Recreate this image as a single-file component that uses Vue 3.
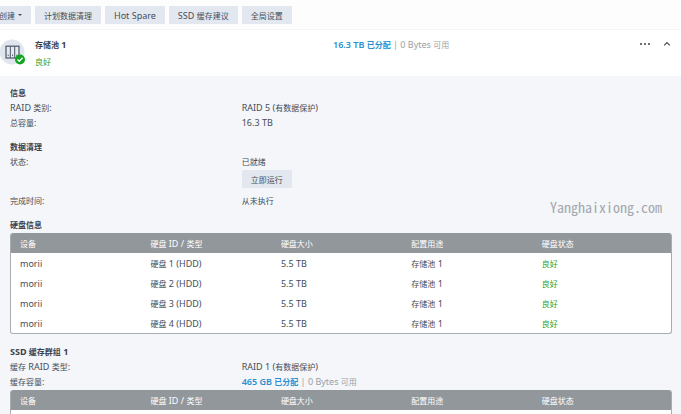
<script setup>
import { h } from 'vue'

// Latin text is set one step larger than the Chinese text beside it.
const Txt = (props) =>
  h(
    'span',
    { class: 'txt' },
    props.t
      .split(/([\u4e00-\u9fff]+)/)
      .filter(Boolean)
      .map((s) => (/[\u4e00-\u9fff]/.test(s) ? h('span', { class: 'han' }, s) : s))
  )
Txt.props = ['t']

const actions = ['计划数据清理', 'Hot Spare', 'SSD 缓存建议', '全局设置']
const columns = ['设备', '硬盘 ID / 类型', '硬盘大小', '配置用途', '硬盘状态']
const disks = [1, 2, 3, 4].map((n) => ({
  device: 'morii',
  id: `硬盘 ${n} (HDD)`,
  size: '5.5 TB',
  usage: '存储池 1',
  status: '良好'
}))
</script>

<template>
  <div class="page">
    <nav class="toolbar">
      <button type="button" class="btn"><Txt t="创建" /><span class="caret"></span></button>
      <button v-for="a in actions" :key="a" type="button" class="btn"><Txt :t="a" /></button>
    </nav>

    <header class="pool">
      <svg class="pool-icon" viewBox="0 0 26 26" aria-hidden="true">
        <circle cx="12" cy="13" r="12.5" fill="#dfe6ee" />
        <rect x="6" y="7.2" width="13" height="11.8" fill="#e6ebf2" stroke="#4c5663" stroke-width="1.2" />
        <path d="M10.3 7.5v11.2M14.7 7.5v11.2" stroke="#4c5663" stroke-width="1" />
        <path d="M8.2 15.6v1.4M12.5 15.6v1.4M16.8 15.6v1.4" stroke="#4c5663" stroke-width="0.9" />
        <circle cx="20" cy="20.5" r="5" fill="#12a522" />
        <path d="M17.5 20.5l1.8 1.8 3.3-3.5" fill="none" stroke="#fff" stroke-width="1.3" />
      </svg>
      <div class="pool-name">
        <h1><Txt t="存储池 1" /></h1>
        <p class="good"><Txt t="良好" /></p>
      </div>
      <p class="usage"><b><Txt t="16.3 TB 已分配" /></b><Txt t=" | 0 Bytes 可用" /></p>
      <div class="tools">
        <button type="button" aria-label="更多">
          <svg width="12" height="10" viewBox="0 0 12 10">
            <g fill="#454d57"><circle cx="2" cy="5" r="1.1" /><circle cx="6" cy="5" r="1.1" /><circle cx="10" cy="5" r="1.1" /></g>
          </svg>
        </button>
        <button type="button" aria-label="收起">
          <svg width="8" height="10" viewBox="0 0 8 10"><path d="M1.2 6.3L4 3.5l2.8 2.8" fill="none" stroke="#454d57" stroke-width="1.2" /></svg>
        </button>
      </div>
    </header>

    <main class="details">
      <section>
        <h2><Txt t="信息" /></h2>
        <dl>
          <dt><Txt t="RAID 类别:" /></dt>
          <dd><Txt t="RAID 5 (有数据保护)" /></dd>
          <dt><Txt t="总容量:" /></dt>
          <dd><Txt t="16.3 TB" /></dd>
        </dl>
      </section>

      <section>
        <h2><Txt t="数据清理" /></h2>
        <dl>
          <dt><Txt t="状态:" /></dt>
          <dd><Txt t="已就绪" /><button type="button" class="btn run"><Txt t="立即运行" /></button></dd>
          <dt><Txt t="完成时间:" /></dt>
          <dd><Txt t="从未执行" /></dd>
        </dl>
        <span class="watermark">Yanghaixiong.com</span>
      </section>

      <section>
        <h2><Txt t="硬盘信息" /></h2>
        <div class="frame">
          <table>
            <thead>
              <tr><th v-for="c in columns" :key="c" scope="col"><Txt :t="c" /></th></tr>
            </thead>
            <tbody>
              <tr v-for="d in disks" :key="d.id">
                <td><Txt :t="d.device" /></td>
                <td><Txt :t="d.id" /></td>
                <td><Txt :t="d.size" /></td>
                <td><Txt :t="d.usage" /></td>
                <td class="good"><Txt :t="d.status" /></td>
              </tr>
            </tbody>
          </table>
        </div>
      </section>

      <section>
        <h2><Txt t="SSD 缓存群组 1" /></h2>
        <dl>
          <dt><Txt t="缓存 RAID 类型:" /></dt>
          <dd><Txt t="RAID 1 (有数据保护)" /></dd>
          <dt><Txt t="缓存容量:" /></dt>
          <dd class="usage"><b><Txt t="465 GB 已分配" /></b><Txt t=" | 0 Bytes 可用" /></dd>
        </dl>
        <div class="frame">
          <table>
            <thead>
              <tr><th v-for="c in columns" :key="c" scope="col"><Txt :t="c" /></th></tr>
            </thead>
            <tbody>
              <tr><td :colspan="columns.length"></td></tr>
            </tbody>
          </table>
        </div>
      </section>
    </main>
  </div>
</template>

<style>
html,
body,
#app {
  height: 100%;
}
body {
  margin: 0;
  overflow: hidden;
}
</style>

<style scoped>
.page {
  height: 100%;
  overflow: hidden;
  background: #f4f6fa;
  color: #454d57;
  font: 9px/15px 'Noto Sans', 'Noto Sans CJK SC', sans-serif;
}
.page :deep(.txt) {
  white-space: pre-wrap;
}
.page :deep(.han) {
  font-size: 8px;
}
h1,
h2,
p,
dl,
dd {
  margin: 0;
  font-size: 9px;
}
h1,
h2 {
  font-weight: 700;
  color: #3a424d;
}
button {
  border: 0;
  padding: 0;
  background: none;
  color: inherit;
  font: inherit;
  cursor: pointer;
}
.toolbar {
  display: flex;
  gap: 4px;
  margin-left: -10px;
  padding: 6px 0 5px;
  background: #fdfdfe;
  border-bottom: 1px solid #f3f5f8;
}
.btn {
  display: flex;
  align-items: center;
  height: 18px;
  padding: 0 9px;
  border-radius: 1px;
  background: #e3e8f0;
  white-space: nowrap;
}
.caret {
  margin-left: 3px;
  border: 2px solid transparent;
  border-top-color: #454d57;
  border-bottom: 0;
}
.pool {
  display: grid;
  grid-template-columns: 35px 298fr 348fr;
  align-items: start;
  position: relative;
  padding: 7px 0;
  background: #fff;
}
.pool-icon {
  width: 26px;
  height: 26px;
  margin-top: 2px;
}
.pool-name {
  display: grid;
  gap: 2px;
}
.good {
  color: #1fa32c;
}
.usage {
  color: #9a9fa6;
}
.usage b {
  font-weight: 600;
  color: #2b8fd0;
}
.tools {
  position: absolute;
  top: 9px;
  right: 10px;
  display: flex;
  gap: 12px;
}
.tools svg {
  display: block;
}
.details {
  display: grid;
  grid-template-columns: minmax(0, 1fr);
  gap: 9px;
  padding: 9px 9px 9px 10px;
}
section {
  position: relative;
}
dl {
  display: grid;
  grid-template-columns: 35% 1fr;
}
.run {
  margin: 1px 0 5px;
}
.watermark {
  position: absolute;
  right: 10px;
  bottom: -8px;
  color: #a3a6ab;
  font: 14px/18px 'Noto Sans Mono CJK SC', 'Liberation Mono', monospace;
}
.frame {
  margin: 1px 0;
  border: 1px solid #a9adb2;
  border-top: 0;
  border-radius: 3px;
  background: #fff;
  overflow: hidden;
}
table {
  width: 100%;
  border-collapse: collapse;
  table-layout: fixed;
}
th,
td {
  height: 20px;
  padding: 0 0 0 9px;
  text-align: left;
  font-weight: 400;
}
th:not(:last-child) {
  width: 18.4%;
}
th {
  background: #92979c;
  color: #fff;
}
</style>
